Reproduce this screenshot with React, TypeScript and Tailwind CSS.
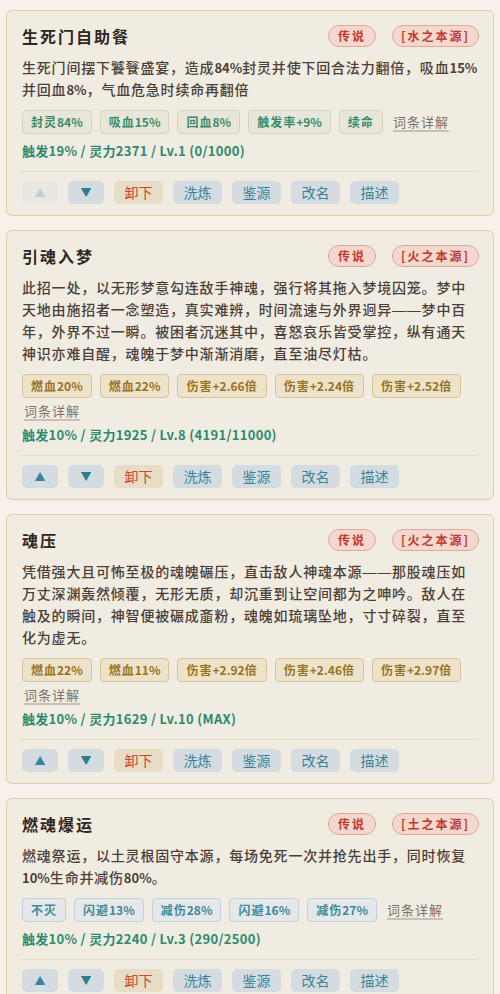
import React from "react";

type Tone = "green" | "gold" | "blue";

interface Card {
  title: string;
  element: string;
  desc: string;
  tags: string[];
  tone: Tone;
  stat: string;
  upDisabled?: boolean;
}

const cards: Card[] = [
  {
    title: "生死门自助餐",
    element: "[水之本源]",
    desc: "生死门间摆下饕餮盛宴，造成84%封灵并使下回合法力翻倍，吸血15%并回血8%，气血危急时续命再翻倍",
    tags: ["封灵84%", "吸血15%", "回血8%", "触发率+9%", "续命"],
    tone: "green",
    stat: "触发19% / 灵力2371 / Lv.1 (0/1000)",
    upDisabled: true,
  },
  {
    title: "引魂入梦",
    element: "[火之本源]",
    desc: "此招一处，以无形梦意勾连敌手神魂，强行将其拖入梦境囚笼。梦中天地由施招者一念塑造，真实难辨，时间流速与外界迥异——梦中百年，外界不过一瞬。被困者沉迷其中，喜怒哀乐皆受掌控，纵有通天神识亦难自醒，魂魄于梦中渐渐消磨，直至油尽灯枯。",
    tags: ["燃血20%", "燃血22%", "伤害+2.66倍", "伤害+2.24倍", "伤害+2.52倍"],
    tone: "gold",
    stat: "触发10% / 灵力1925 / Lv.8 (4191/11000)",
  },
  {
    title: "魂压",
    element: "[火之本源]",
    desc: "凭借强大且可怖至极的魂魄碾压，直击敌人神魂本源——那股魂压如万丈深渊轰然倾覆，无形无质，却沉重到让空间都为之呻吟。敌人在触及的瞬间，神智便被碾成齑粉，魂魄如琉璃坠地，寸寸碎裂，直至化为虚无。",
    tags: ["燃血22%", "燃血11%", "伤害+2.92倍", "伤害+2.46倍", "伤害+2.97倍"],
    tone: "gold",
    stat: "触发10% / 灵力1629 / Lv.10 (MAX)",
  },
  {
    title: "燃魂爆运",
    element: "[土之本源]",
    desc: "燃魂祭运，以土灵根固守本源，每场免死一次并抢先出手，同时恢复10%生命并减伤80%。",
    tags: ["不灭", "闪避13%", "减伤28%", "闪避16%", "减伤27%"],
    tone: "blue",
    stat: "触发10% / 灵力2240 / Lv.3 (290/2500)",
  },
];

const toneClass: Record<Tone, string> = {
  green: "bg-[#e8e6d8] border-[#d3d2bb] text-[#3a8b6b]",
  gold: "bg-[#ede3ca] border-[#d8c499] text-[#987322]",
  blue: "bg-[#e5e7e8] border-[#bfd0e0] text-[#3f8a98]",
};

const FONT = { fontFamily: '"Noto Sans CJK SC", "Noto Sans", sans-serif' };

const LATIN = /^[0-9A-Za-z%+.]+$/;

function Rich({ text }: { text: string }) {
  const parts = text.split(/(——|[0-9A-Za-z%+.]+)/);
  return (
    <>
      {parts.map((p, i) => {
        if (p === "——")
          return (
            <span key={i} className="font-['Liberation_Sans',sans-serif] leading-[14px]">
              {p}
            </span>
          );
        if (LATIN.test(p))
          return (
            <span key={i} className="text-[13px] leading-[14px] tracking-normal font-semibold">
              {p}
            </span>
          );
        return <React.Fragment key={i}>{p}</React.Fragment>;
      })}
    </>
  );
}

function TagText({ text }: { text: string }) {
  const parts = text.split(/([0-9A-Za-z%+.]+)/);
  return (
    <>
      {parts.map((p, i) =>
        LATIN.test(p) ? (
          <span key={i} className="tracking-normal">
            {p}
          </span>
        ) : (
          <React.Fragment key={i}>{p}</React.Fragment>
        )
      )}
    </>
  );
}

function Btn({ children, kind, wide }: { children: React.ReactNode; kind: "blue" | "red" | "off"; wide?: boolean }) {
  const cls =
    kind === "blue"
      ? "bg-[#d4dce2] text-[#3a8499]"
      : kind === "red"
      ? "bg-[#e7dcc5] text-[#cc4435]"
      : "bg-[#e8e7e0] text-[#b8d2ce]";
  return (
    <div
      className={`h-[23px] ${wide ? "w-[49px]" : "w-[36px]"} rounded-[5px] flex items-center justify-center ${cls}`}
    >
      {children}
    </div>
  );
}

function SkillCard({ c }: { c: Card }) {
  return (
    <div className="rounded-[6px] border border-[#e3cba3] bg-[#f1ece2] px-[15px] pt-[14px] pb-[11px]">
      <div className="flex items-center justify-between h-[22px]">
        <div className="text-[16px] font-bold tracking-[2px] text-[#2e2620] leading-[22px]">{c.title}</div>
        <div className="flex gap-[16px] mr-[-1px]">
          <div className="h-[22px] px-[9px] rounded-full border border-[#e2a79e] bg-[#f3d8d0] text-[#c23a2e] text-[12px] font-bold tracking-[2px] flex items-center">
            传说
          </div>
          <div className="h-[22px] px-[8px] rounded-full border border-[#e2a79e] bg-[#f3d8d0] text-[#c23a2e] text-[12px] font-bold tracking-[2px] flex items-center">
            {c.element}
          </div>
        </div>
      </div>
      <div className="mt-[9px] text-[14px] leading-[22px] tracking-[0.8px] font-medium text-[#4b4038]">
        <Rich text={c.desc} />
      </div>
      <div className="mt-[10px] flex flex-wrap items-center gap-x-[8px] gap-y-[6px]">
        {c.tags.map((t, i) => (
          <div
            key={i}
            className={`h-[24px] px-[8px] rounded-[4px] border text-[12px] font-bold tracking-[1px] flex items-center ${toneClass[c.tone]}`}
          >
            <TagText text={t} />
          </div>
        ))}
        <div className="text-[13px] leading-[14px] tracking-[1px] text-[#7b726a] underline decoration-[#c9c0b5] decoration-2 underline-offset-[3px] ml-[2px]">
          词条详解
        </div>
      </div>
      <div className="mt-[8px] text-[13px] leading-[18px] font-bold tracking-[0.3px] text-[#2d8a6d]">{c.stat}</div>
      <div className="mt-[11px] h-px bg-[#e3dacb]" />
      <div className="mt-[9px] flex gap-[10px] text-[14px]">
        <Btn kind={c.upDisabled ? "off" : "blue"}>
          <span className="text-[11px]">▲</span>
        </Btn>
        <Btn kind="blue">
          <span className="text-[11px] text-[#2e7d8a]">▼</span>
        </Btn>
        <Btn kind="red" wide>
          卸下
        </Btn>
        <Btn kind="blue" wide>
          洗炼
        </Btn>
        <Btn kind="blue" wide>
          鉴源
        </Btn>
        <Btn kind="blue" wide>
          改名
        </Btn>
        <Btn kind="blue" wide>
          描述
        </Btn>
      </div>
    </div>
  );
}

export default function App() {
  return (
    <div style={FONT} className="min-h-screen bg-[#f8f0eb] px-[6px] pt-[10px] pb-[10px] flex flex-col gap-[14px]">
      {cards.map((c, i) => (
        <SkillCard key={i} c={c} />
      ))}
    </div>
  );
}
